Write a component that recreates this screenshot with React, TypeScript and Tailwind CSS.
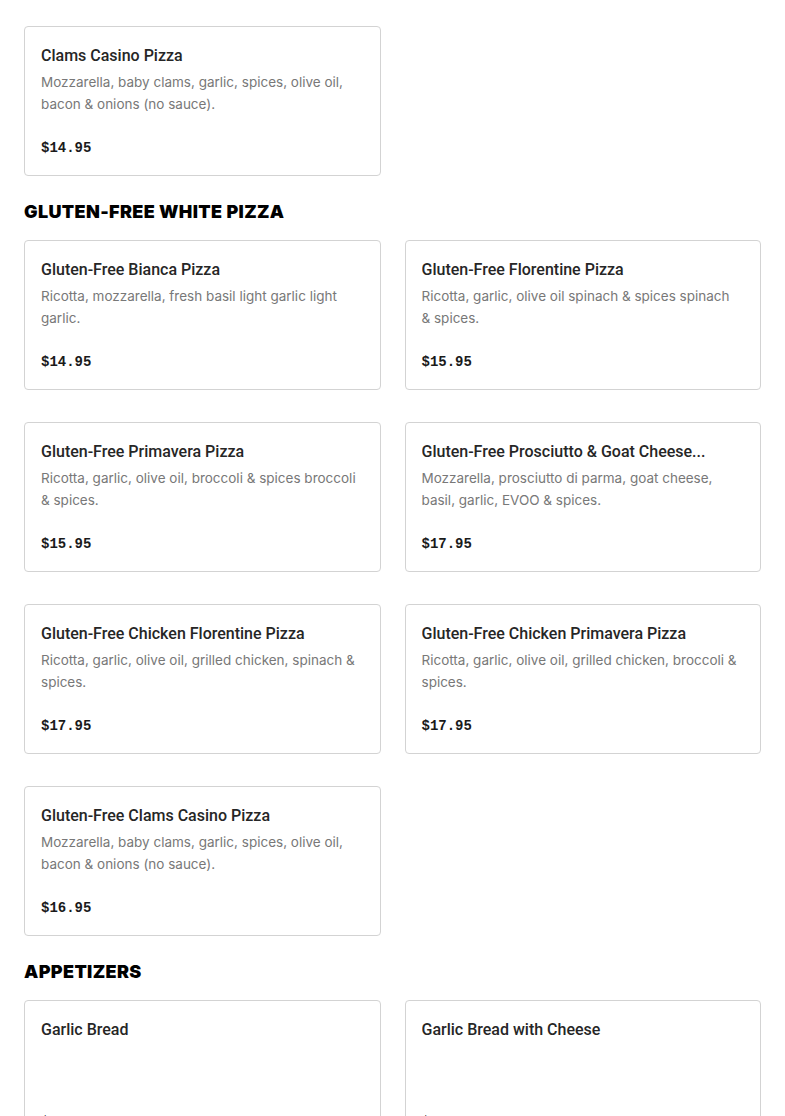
import React from "react";

type Item = { name: string; desc?: string; price: string };

const sections: { title?: string; items: Item[] }[] = [
  {
    items: [
      {
        name: "Clams Casino Pizza",
        desc: "Mozzarella, baby clams, garlic, spices, olive oil, bacon & onions (no sauce).",
        price: "$14.95",
      },
    ],
  },
  {
    title: "GLUTEN-FREE WHITE PIZZA",
    items: [
      {
        name: "Gluten-Free Bianca Pizza",
        desc: "Ricotta, mozzarella, fresh basil light garlic light garlic.",
        price: "$14.95",
      },
      {
        name: "Gluten-Free Florentine Pizza",
        desc: "Ricotta, garlic, olive oil spinach & spices spinach & spices.",
        price: "$15.95",
      },
      {
        name: "Gluten-Free Primavera Pizza",
        desc: "Ricotta, garlic, olive oil, broccoli & spices broccoli & spices.",
        price: "$15.95",
      },
      {
        name: "Gluten-Free Prosciutto & Goat Cheese...",
        desc: "Mozzarella, prosciutto di parma, goat cheese, basil, garlic, EVOO & spices.",
        price: "$17.95",
      },
      {
        name: "Gluten-Free Chicken Florentine Pizza",
        desc: "Ricotta, garlic, olive oil, grilled chicken, spinach & spices.",
        price: "$17.95",
      },
      {
        name: "Gluten-Free Chicken Primavera Pizza",
        desc: "Ricotta, garlic, olive oil, grilled chicken, broccoli & spices.",
        price: "$17.95",
      },
      {
        name: "Gluten-Free Clams Casino Pizza",
        desc: "Mozzarella, baby clams, garlic, spices, olive oil, bacon & onions (no sauce).",
        price: "$16.95",
      },
    ],
  },
  {
    title: "APPETIZERS",
    items: [
      { name: "Garlic Bread", price: "$5.95" },
      { name: "Garlic Bread with Cheese", price: "$6.95" },
    ],
  },
];

const Card = ({ item }: { item: Item }) => {
  return (
    <div className="h-[150px] flex flex-col border border-[#d3d3d3] rounded-[4px] bg-white pl-4 pr-5 pt-[17px] pb-4">
      <h3 className="text-[16px] leading-[24px] font-medium text-[#262626] truncate font-['Roboto',sans-serif]">
        {item.name}
      </h3>
      {item.desc && (
        <p className="mt-[3px] text-[13.5px] leading-[22px] text-[#787878]">
          {item.desc}
        </p>
      )}
      <p className="mt-auto text-[14px] leading-[22px] font-bold text-[#1a1a1a] font-['Liberation_Mono',monospace]">
        {item.price}
      </p>
    </div>
  );
};

export default function App() {
  return (
    <main className="bg-white min-h-screen w-full px-6 pt-[26px] font-['Inter',sans-serif]">
      {sections.map((s, i) => (
        <section key={i} className={i > 0 ? "mt-6" : ""}>
          {s.title && (
            <h2 className="text-[18px] leading-[24px] font-black text-black mb-4 tracking-[0.02em]">
              {s.title}
            </h2>
          )}
          <div className="grid grid-cols-2 gap-x-6 gap-y-8">
            {s.items.map((it) => (
              <Card key={it.name} item={it} />
            ))}
          </div>
        </section>
      ))}
    </main>
  );
}
